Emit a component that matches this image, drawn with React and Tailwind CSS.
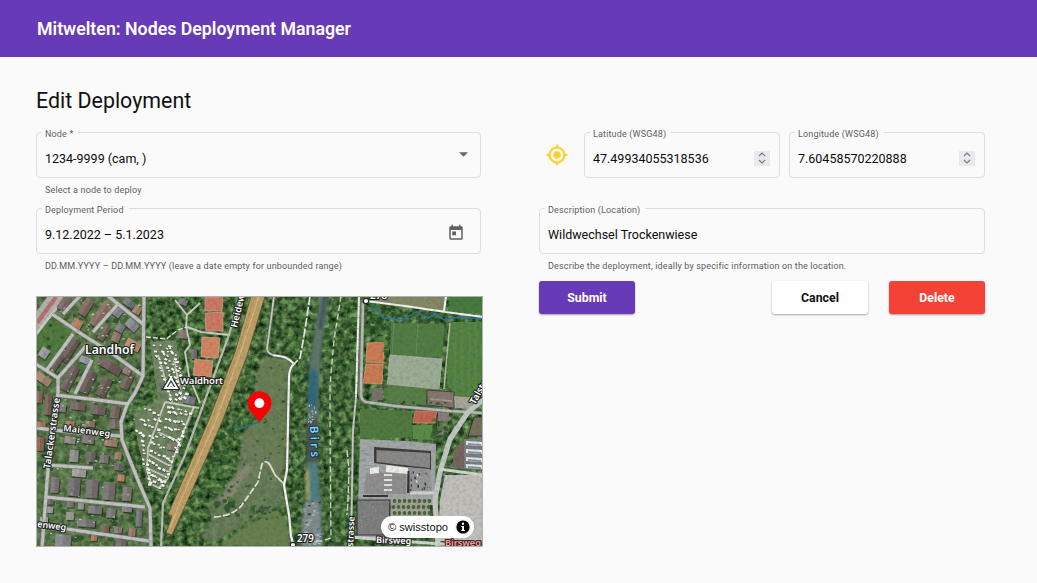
import React from "react";

function random(seed) {
  let s = seed;
  return () => {
    s = (s * 16807) % 2147483647;
    return s / 2147483647;
  };
}

function scatter(seed, count, x, y, w, h, min, max, colors) {
  const r = random(seed);
  return Array.from({ length: count }, () => ({
    x: x + r() * w,
    y: y + r() * h,
    s: min + r() * (max - min),
    c: colors[Math.floor(r() * colors.length)],
  }));
}

const TREE = ["#23421e", "#31552a", "#44703a", "#547f43", "#2a4b26"];

function Trees({ items }) {
  return items.map((t, i) => (
    <ellipse key={i} cx={t.x} cy={t.y} rx={t.s} ry={t.s * 0.85} fill={t.c} opacity="0.7" />
  ));
}

// center x, center y, width, height, rotation, roof colour
const HOUSES = [
  [86, 307, 9, 18, 32, "#7b6358"], [101, 314, 10, 28, 35, "#84695d"], [64, 304, 9, 14, 35, "#75645b"],
  [77, 324, 10, 9, 30, "#b77a5a"], [104, 333, 7, 16, 33, "#6f5d55"], [117, 312, 10, 9, 38, "#838388"],
  [132, 325, 13, 9, 40, "#85858d"], [129, 303, 12, 7, 35, "#6d7075"], [137, 310, 8, 8, 30, "#a17c65"],
  [116, 337, 8, 10, 20, "#8d7565"], [133, 345, 15, 9, 28, "#b6866a"], [120, 328, 8, 8, 30, "#777980"],
  [70, 350, 8, 26, 33, "#655650"], [57, 362, 7, 17, 35, "#6a5c55"], [44, 353, 9, 10, 35, "#95979b"],
  [85, 360, 10, 7, 20, "#8b93a3"], [70, 378, 9, 27, 27, "#695a54"], [88, 382, 10, 24, 26, "#63544f"],
  [104, 387, 10, 20, 26, "#65554f"], [127, 381, 9, 17, 24, "#6b5a53"], [110, 366, 24, 9, 32, "#6b5753"],
  [127, 371, 8, 7, 28, "#86766e"], [43, 379, 17, 8, 35, "#a08069"], [48, 405, 7, 20, 3, "#735c51"],
  [39, 397, 7, 12, 5, "#806355"], [78, 406, 15, 8, 8, "#6f5e57"], [98, 410, 15, 9, 8, "#6d5d58"],
  [115, 412, 9, 13, 8, "#70605a"], [62, 408, 8, 8, 8, "#7d7776"], [115, 424, 11, 10, 4, "#6d6560"],
  [90, 424, 10, 6, 6, "#866e61"], [70, 424, 9, 6, 6, "#a2795f"], [41, 425, 9, 6, 2, "#a87155"],
  [40, 444, 8, 14, 3, "#8a604d"], [70, 440, 11, 7, 8, "#8b8781"], [88, 440, 12, 7, 8, "#76716d"],
  [111, 443, 13, 7, 8, "#9b7460"], [74, 456, 9, 12, 4, "#898a8c"], [91, 457, 9, 10, 4, "#686363"],
  [104, 459, 9, 8, 4, "#78716e"], [118, 456, 7, 7, 4, "#9b7966"], [119, 467, 11, 7, 6, "#64605e"],
  [79, 473, 14, 8, 5, "#9b9a97"], [121, 478, 7, 7, 6, "#ba7b60"], [55, 485, 8, 16, 5, "#777071"],
  [74, 487, 12, 18, 5, "#6e686a"], [92, 489, 12, 18, 5, "#706a6b"], [109, 491, 12, 18, 5, "#716b6c"],
  [127, 494, 9, 14, 5, "#7e716e"], [50, 510, 6, 6, 4, "#969997"], [50, 502, 7, 5, 4, "#686666"],
  [70, 504, 7, 7, 4, "#767170"], [81, 506, 6, 7, 4, "#8e8f8b"], [95, 510, 14, 8, 5, "#777478"],
  [111, 513, 9, 10, 5, "#777376"], [127, 509, 10, 6, 5, "#82807e"], [139, 518, 6, 17, 3, "#706f74"],
  [70, 516, 8, 8, 4, "#96938f"], [86, 523, 18, 8, 4, "#747376"], [105, 529, 8, 7, 5, "#785f54"],
  [118, 530, 8, 7, 5, "#80736d"], [132, 532, 7, 8, 5, "#9a7360"], [63, 541, 16, 13, 5, "#7f7f82"],
  [94, 538, 6, 6, 5, "#a97352"], [121, 543, 11, 7, 5, "#6a6562"], [44, 520, 8, 6, 3, "#aaa8a3"],
  [189, 400, 13, 8, 15, "#77767b"], [194, 354, 6, 10, 2, "#6c6863"], [171, 447, 9, 6, 10, "#837871"],
  [183, 334, 9, 9, 5, "#83736c"], [183, 302, 9, 6, 25, "#77757a"],
];

const CITY_ROADS =
  "M52 314L80 333L110 352L143 376 M73 334L46 371 M108 296L143 324 M63 314L80 296 M118 304L93 332 M144 296L143 376L135 393L127 405L121 422L122 440L131 463L140 485L150 508L151 547 M36 364L58 378L58 394L52 422L48 470L42 547 M56 395L90 399L129 404 M86 346L58 378 M92 360L75 394 M36 428L80 433L121 436 M48 465L93 468 M46 497L145 507 M42 526L60 528L149 541";
const CAMP_ROADS =
  "M158 355L172 402 M174 360L182 398 M165 402L148 448L147 470L151 484L159 488L168 478L172 462L186 425L194 407 M165 402L199 408 M158 432L178 441 M148 454L168 465 M147 468L164 476 M187 315L186 326L190 345L185 352L189 376L200 403 M175 300L187 315L200 303 M187 327L201 332L229 335";

// x1, y1, x2, y2 of every row of caravans
const CAMP_ROWS = [
  [154, 345, 170, 398], [160, 345, 176, 398], [166, 347, 180, 396], [172, 350, 183, 378], [169, 344, 178, 374],
  [181, 378, 185, 396], [144, 408, 157, 413], [140, 418, 158, 418], [135, 430, 156, 436], [143, 424, 157, 427],
  [168, 410, 184, 414], [165, 417, 184, 422], [163, 425, 182, 430], [160, 434, 176, 438], [168, 405, 189, 411],
  [184, 427, 176, 445], [178, 444, 168, 463], [142, 440, 143, 462], [150, 440, 164, 447], [150, 450, 170, 459],
  [148, 460, 167, 470], [149, 474, 160, 477], [146, 464, 149, 484], [167, 472, 160, 488], [153, 479, 165, 480],
];

function caravans() {
  const r = random(77);
  return CAMP_ROWS.flatMap(([x1, y1, x2, y2]) => {
    const n = Math.round(Math.hypot(x2 - x1, y2 - y1) / 4.3);
    return Array.from({ length: n + 1 }, (_, i) => ({
      x: x1 - 1 + ((x2 - x1) * i) / n + r() * 2.4,
      y: y1 - 1 + ((y2 - y1) * i) / n + r() * 2.4,
      s: 1.3 + r() * 1.2,
      a: r() * 50,
    }));
  });
}

function MapLabel({ x, y, size = 10, rotate = 0, fill = "#fff", stroke = "#20241f", children, spacing = 0 }) {
  return (
    <text
      x={x}
      y={y}
      transform={`rotate(${rotate} ${x} ${y})`}
      fontFamily="Noto Sans, sans-serif"
      fontWeight="600"
      fontSize={size}
      letterSpacing={spacing}
      fill={fill}
      stroke={stroke}
      strokeWidth="2.2"
      strokeLinejoin="round"
      paintOrder="stroke"
    >
      {children}
    </text>
  );
}

function AerialMap() {
  return (
    <svg viewBox="36 296 447 251" className="block h-full w-full" preserveAspectRatio="none">
      <defs>
        <filter id="leaves" x="0" y="0" width="100%" height="100%" colorInterpolationFilters="sRGB">
          <feTurbulence type="fractalNoise" baseFrequency="0.17" numOctaves="4" seed="8" result="n" />
          <feColorMatrix in="n" type="matrix" values="0.7 0 0 0 -0.08  0.8 0 0 0 0.01  0.55 0 0 0 -0.05  0 0 0 0 1" result="g" />
          <feComposite in="g" in2="SourceGraphic" operator="in" />
        </filter>
        <filter id="grain" x="0" y="0" width="100%" height="100%" colorInterpolationFilters="sRGB">
          <feTurbulence type="fractalNoise" baseFrequency="0.3" numOctaves="3" seed="4" />
          <feColorMatrix type="matrix" values="0 0 0 0 0.08  0 0 0 0 0.1  0 0 0 0 0.07  1.8 0 0 0 -0.76" />
        </filter>
        <filter id="soft"><feGaussianBlur stdDeviation="0.45" /></filter>
        <filter id="softer"><feGaussianBlur stdDeviation="1.8" /></filter>
      </defs>
      <rect x="36" y="296" width="447" height="251" fill="#3f6334" filter="url(#leaves)" />
      <g filter="url(#soft)">
        <path d="M36 296H144L143 376L128 404L122 440L151 508V547H36Z" fill="#6c825a" opacity="0.5" />
        <path d="M37 330L56 318L72 332L46 366L37 360Z" fill="#4b7a3b" opacity="0.7" />
        <Trees items={scatter(7, 260, 36, 296, 108, 251, 1.2, 3.4, TREE)} />
        <path d="M150 342L176 340L186 398L196 406L180 448L164 490L148 484L137 440L134 414L158 400Z" fill="#7b8b6b" opacity="0.8" />

        <path d="M36 312L48 296H66L36 337Z" fill="#b1b1ae" />
        <path d="M37 323L56 297" stroke="#b9706c" strokeWidth="4" />
        <path d="M36 334L60 304" stroke="#cfcfcb" strokeWidth="2.5" />

        {HOUSES.map(([x, y, w, h, a, c], i) => (
          <g key={i} transform={`translate(${x} ${y}) rotate(${a})`}>
            <rect x={-w / 2 + 1.2} y={-h / 2 + 1.2} width={w} height={h} fill="#1c241b" opacity="0.6" />
            <rect x={-w / 2} y={-h / 2} width={w} height={h} fill={c} />
            <rect x={-w / 2} y={-h / 2} width={w / 2} height={h} fill="#fff" opacity="0.12" />
          </g>
        ))}
        {scatter(91, 150, 50, 300, 90, 240, 0.6, 1.5, ["#d7d8d3", "#aeb0ac", "#85c6c3", "#e4e1d8", "#c9c4b8"]).map((p, i) => (
          <rect key={i} x={p.x} y={p.y} width={p.s * 1.6} height={p.s} fill={p.c} opacity="0.8" />
        ))}
        <path d={CITY_ROADS} fill="none" stroke="#7d8079" strokeWidth="4.4" />
        <path d={CITY_ROADS} fill="none" stroke="#c3c4c2" strokeWidth="3.1" strokeLinejoin="round" />
        <path d={CAMP_ROADS} fill="none" stroke="#c9ccbf" strokeWidth="1.9" strokeLinejoin="round" />
        <path d="M146 337L166 339L178 330L187 327" fill="none" stroke="#eef0ea" strokeWidth="1.3" strokeDasharray="5 2" />
        {caravans().map((p, i) => (
          <g key={i} transform={`rotate(${p.a} ${p.x} ${p.y})`}>
            <rect x={p.x + 0.8} y={p.y + 0.8} width={p.s * 1.5} height={p.s} fill="#2c3b27" opacity="0.6" />
            <rect x={p.x} y={p.y} width={p.s * 1.5} height={p.s} fill="#f6f7f4" />
          </g>
        ))}

        <g stroke="#dcae9a" strokeWidth="0.6">
          <path d="M205 297H223L222 311H205Z M205 313L223 312V331H206Z" fill="#cb7963" />
          <path d="M202 337L220 338L218 358L201 357Z" fill="#d08562" />
          <path d="M195 359L213 361L211 377L193 375Z" fill="#d08562" />
        </g>
      </g>

      <g filter="url(#softer)">
        <path d="M264 356L283 359L293 366L287 380L286 466L280 478L266 468L246 452L240 436L256 420L255 380Z" fill="#6d7f56" opacity="0.9" />
        <path d="M246 436L280 460L284 505L262 514L238 528L215 542L200 538L213 518L208 506L234 476Z" fill="#718060" opacity="0.8" />
        <path d="M276 508L286 520L291 546H218L240 530Z" fill="#67804f" />
        <path d="M219 498L246 464L256 464L226 505Z" fill="#918e7e" opacity="0.7" />
      </g>
      <g filter="url(#soft)">
        <Trees items={scatter(12, 50, 252, 360, 32, 100, 0.6, 1.6, TREE)} />
        <Trees items={scatter(15, 45, 218, 452, 66, 65, 0.6, 1.6, TREE)} />
        <Trees items={scatter(16, 60, 226, 505, 60, 14, 0.8, 2.4, TREE)} />
        <Trees items={scatter(18, 150, 295, 297, 62, 250, 1.5, 3.6, TREE)} />
        <Trees items={scatter(19, 80, 200, 430, 32, 80, 1.5, 3.6, TREE)} />
        <path d="M240 296L229 335L205 400L185 455L163 503L161 547" fill="none" stroke="#b9beb4" strokeWidth="2.2" />
        <path d="M251 296H265L247 356L222 422L187 502L172 535L166 533L172 516L168 514L185 475L208 422L235 352Z" fill="#be9f67" stroke="#5c5437" strokeWidth="0.8" />
        <path d="M259 296L240 354L216 420L180 502L170 528" fill="none" stroke="#d3b87e" strokeWidth="1.2" />
        <path d="M255 296L238 350L212 420L178 500" fill="none" stroke="#a38c5b" strokeWidth="0.7" />
      </g>

      <g filter="url(#softer)">
        <path d="M320 296H329L322 345L319 385L318 460L321 500L323 547H301L307 500L307 430L309 366Z" fill="#61766a" />
        <path d="M309 374Q313 362 318 375L317 408H308Z" fill="#33697a" />
        <path d="M325 296L320 330" stroke="#33505d" strokeWidth="3" />
        <path d="M307 418H318V462H307Z" fill="#4b5652" />
        <path d="M308 464H317L319 500H307Z" fill="#4e7f82" />
        <path d="M304 502H319L322 546H300Z" fill="#828b87" />
        <path d="M307 470L308 500" stroke="#b2a574" strokeWidth="3" />
      </g>
      <g fill="none" filter="url(#soft)">
        {scatter(66, 60, 303, 499, 16, 46, 1, 3, ["#b9c4c2", "#5d82a0", "#a9b5b4", "#394b48", "#7ea3bd"]).map((p, i) => (
          <rect key={i} x={p.x} y={p.y} width={p.s * 1.2} height={p.s * 0.7} fill={p.c} />
        ))}
        {scatter(68, 22, 308, 404, 7, 18, 0.8, 1.7, ["#aebed1", "#c9dae6", "#547b98"]).map((p, i) => (
          <rect key={i} x={p.x} y={p.y} width={p.s} height={p.s * 1.4} fill={p.c} />
        ))}
        <path d="M274 296L271 320L267 348Q267 353 273 355C281 357 286 355 294 364Q289 368 289 378L288 422L287 470L284 485L289 515L291 536L294 547" stroke="#5e6757" strokeWidth="3.2" />
        <path d="M274 296L271 320L267 348Q267 353 273 355" stroke="#ccd1c7" strokeWidth="1.7" />
        <path d="M273 355C281 357 286 355 294 364Q289 368 289 378L288 422L287 470L284 485L289 515L291 536L294 547" stroke="#f3f4ef" strokeWidth="2.2" />
        <path d="M310 296L305 330L300 358L294 364" stroke="#eaece6" strokeWidth="1.7" strokeDasharray="9 2" />
        <path d="M214 517Q233 516 242 505L258 482L262 464Q266 459 270 465" stroke="#e5e7df" strokeWidth="1.7" strokeDasharray="7 2" />
        <path d="M270 465L275 475L284 484" stroke="#e5e7df" strokeWidth="1.7" />
        <path d="M341 296L334 340L330 385L330 430L331 538L322 541L298 541" stroke="#d5d8d0" strokeWidth="1.3" strokeDasharray="6 3" />
        <path d="M347 450L349 470L348 500L347 515" stroke="#d5d8d0" strokeWidth="1.4" strokeDasharray="7 2" />
        <path d="M233 427L243 428L250 425L259 422" stroke="#28727b" strokeWidth="1.5" />
      </g>

      <g filter="url(#soft)">
        <path d="M376 296H445L443 311L372 302Z" fill="#848866" />
        <path d="M451 296H483V314L449 311Z" fill="#467a41" />
        <path d="M391 323L444 324L442 358L390 355Z" fill="#527c45" />
        <path d="M449 322H483V397L457 398L447 385Z" fill="#538143" />
        <path d="M385 384L440 389L427 391L426 405L384 402Z" fill="#587e46" />
        <path d="M360 409L412 411L412 437L360 439Z" fill="#517940" />
        <path d="M390 355L442 359L439 389L387 384Z" fill="#9dac95" stroke="#b3bbab" strokeWidth="0.8" />
        <path d="M415 357L413 386 M394 323L392 354 M418 324L416 355" stroke="#a5b59a" opacity="0.45" strokeWidth="0.6" />
        {[455, 462, 469, 476].map((x) => (
          <path key={x} d={`M${x} 322V398`} stroke="#659253" strokeWidth="2.5" opacity="0.3" />
        ))}
        <path d="M367 343L384 342L384 363L366 362Z M366 364L383 364L382 384L363 383Z" fill="#c97b54" stroke="#d9a17f" strokeWidth="0.7" />
        <path d="M373 388H383V400H372Z" fill="#7c706c" />
        <path d="M427 390L454 392V408L427 405Z" fill="#85776f" stroke="#484340" />
        <path d="M430 399L452 401" stroke="#a49a93" strokeWidth="1.5" />
        <path d="M454 396L476 398L470 409L455 408Z" fill="#a8a59c" />
        <path d="M415 411H437L435 423H413Z" fill="#c1654f" stroke="#dc9b84" strokeWidth="0.6" />
        <path d="M438 411H449V421H438Z" fill="#857976" />
        <path d="M412 425L436 425L433 440L413 439Z" fill="#5b8b4a" />
        <path d="M438 412H449L446 434L436 436Z" fill="#8b7f78" opacity="0.6" />
        <Trees items={scatter(23, 60, 364, 304, 24, 36, 1, 3.2, TREE)} />
        <Trees items={scatter(27, 45, 385, 311, 90, 10, 1, 2.4, TREE)} />
        <Trees items={scatter(28, 25, 384, 340, 3, 62, 1, 2.2, TREE)} />
        <Trees items={scatter(29, 30, 433, 420, 13, 20, 1, 2.8, TREE)} />
        <Trees items={scatter(32, 22, 360, 402, 90, 6, 0.8, 2, TREE)} />

        <path d="M360 439L407 441L436 444L435 505H390V538H357Z" fill="#a1a5a5" />
        {scatter(71, 34, 359, 442, 10, 50, 1, 2, ["#b1bab8", "#8e9897"]).map((p, i) => (
          <rect key={i} x={p.x} y={p.y} width="7" height="0.8" fill={p.c} />
        ))}
        <path d="M374 447L431 451V470L374 463Z" fill="#3c3d3d" />
        <path d="M376.500 450L430 453V468L376.500 462Z" fill="#8b8988" />
        <path d="M366 473L406 472V494L364 494Z" fill="#918e90" />
        <path d="M406 467L430 469L432 491H409Z" fill="#939596" />
        <path d="M386 465L408 468V474L386 472Z M370 468L379 467V473L370 474Z" fill="#ecede9" />
        <path d="M407.500 471H409.500V493H407Z M363 495H388V497H363Z" fill="#343638" />
        {[474, 479, 484, 489].map((y) => <rect key={y} x="384" y={y} width="8" height="2" fill="#e2e2dd" />)}
        <path d="M357 500H390L389 535H357Z" fill="#807f80" stroke="#35383b" strokeWidth="1.2" />
        {scatter(73, 16, 360, 503, 26, 28, 0.6, 1.1, ["#b8b8b8", "#9b9a9b"]).map((p, i) => (
          <rect key={i} x={p.x} y={p.y} width={p.s} height={p.s} fill={p.c} />
        ))}
        <path d="M391 499H430V525H390Z" fill="#a3a193" />
        {[501, 507, 513, 519].map((y) =>
          [393, 398, 403, 408, 413, 418, 423, 428].map((x) => (
            <ellipse key={`${x}-${y}`} cx={x + ((y * 3) % 4) / 2} cy={y} rx="1.8" ry="2" fill="#46663a" />
          ))
        )}
        {scatter(38, 27, 410, 471, 18, 18, 0.8, 1.6, ["#ddd", "#464a50", "#9aa5ae", "#242b34"]).map((p, i) => (
          <rect key={i} x={p.x} y={p.y} width={p.s} height={p.s * 1.7} fill={p.c} />
        ))}
        <path d="M445 475H483V541H438L440 500Z" fill="#c0bfb9" />
        <path d="M464 439L483 438V470L450 468Z" fill="#7e7f80" />
        <path d="M455 448L464 439V468L452 467Z" fill="#74655f" />
        {[441, 449, 457, 464].map((y) => (
          <g key={y}>
            <path d={`M466 ${y}L482 ${y + 1}V${y + 5}L466 ${y + 4}Z`} fill="#e6e9ea" />
            <path d={`M468 ${y + 2}L481 ${y + 3}V${y + 5}L468 ${y + 4}Z`} fill="#8395a8" />
          </g>
        ))}
        <path d="M474 417H483V436H468Z" fill="#77705c" stroke="#343c30" />

        <g fill="none" strokeLinejoin="round">
          <path d="M362 301L360 390Q359 400 366 402L395 406L450 411L482 413" stroke="#6e756a" strokeWidth="4.2" />
          <path d="M363 303L361 390Q360 400 366 402L395 406L450 411L482 413" stroke="#b9bcb5" strokeWidth="2.7" />
          <path d="M359 296L356 397L353 430L351 547" stroke="#c6cac0" strokeWidth="2" />
          <path d="M359 296L356 397" stroke="#eff1eb" strokeWidth="1.7" strokeDasharray="10 1" />
          <path d="M366 301L405 306L446 312L483 317 M446 296L444 311" stroke="#f4f5f1" strokeWidth="2.1" />
          <path d="M450 323L447 355L444 389" stroke="#b5bda8" strokeWidth="1.5" />
          <path d="M483 400L468 412L450 439L440 472L435 500L438 547" stroke="#c3c6c3" strokeWidth="5.2" />
          <path d="M439 469L483 475 M410 493H434 M350 537L400 541L483 547" stroke="#d2d3d0" strokeWidth="3.2" />
          <path d="M369 309L376 309L383 318L403 320L416 312L428 318L436 314L444 320L460 317L483 319" stroke="#2d74a0" strokeWidth="1.4" />
        </g>
      </g>

      <rect x="36" y="296" width="447" height="251" filter="url(#grain)" opacity="0.16" />

      <circle cx="366" cy="301" r="2.7" fill="#fff" stroke="#222" strokeWidth="1.2" />
      <circle cx="293" cy="545" r="2.7" fill="#fff" stroke="#222" strokeWidth="1.2" />
      <MapLabel x={370} y={299} size={10}>278</MapLabel>
      <MapLabel x={85} y={354} size={12.2}>Landhof</MapLabel>
      <path d="M165 388L171 378L177 388Z" fill="none" stroke="#273026" strokeWidth="4.5" />
      <path d="M165 388L171 378L177 388Z M168.5 388L171 384L173.5 388M170 376L172 379M172 376L170 379" fill="#313832" stroke="#fff" strokeWidth="1.8" />
      <MapLabel x={180} y={384} size={9.5}>Waldhort</MapLabel>
      <MapLabel x={63} y={431} size={8.9} rotate={7} spacing={0.3}>Maienweg</MapLabel>
      <MapLabel x={50} y={469} size={9.5} rotate={-82}>Talackerstrasse</MapLabel>
      <MapLabel x={237} y={328} size={9.3} rotate={-77}>Heidew</MapLabel>
      <MapLabel x={37} y={527} size={8.9} rotate={7}>enweg</MapLabel>
      <MapLabel x={310} y={426} size={11.5} rotate={88} spacing={3.2} fill="#86d0ef" stroke="#183c52">Birs</MapLabel>
      <MapLabel x={297} y={542} size={9.8}>279</MapLabel>
      <MapLabel x={353} y={547} size={8.8} rotate={-87}>strasse</MapLabel>
      <MapLabel x={376} y={543} size={9} rotate={2}>Birsweg</MapLabel>
      <MapLabel x={445} y={546} size={9.2} fill="#efa0a4" stroke="#422226">Birsweg</MapLabel>
      <MapLabel x={475} y={405} size={9.5} rotate={-61}>Talstr</MapLabel>

      <path d="M259.5 422.5C256 416 247.5 411 247.5 403.2A12 12 0 0 1 271.5 403.2C271.5 411 263 416 259.5 422.5Z" fill="#f90006" />
      <circle cx="259.4" cy="403.2" r="4.9" fill="#fff" />
      <path d="M36 296.5H482.5V546.5H36.5V296" fill="none" stroke="#aeb1ad" />
    </svg>
  );
}

function Field({ label, className = "", children }) {
  return (
    <div className={`relative flex h-[46px] items-center rounded-[4px] border border-[#dedede] pl-2 pt-[7px] ${className}`}>
      <span className="absolute -top-[6px] left-[5px] bg-[#fafafa] pl-[3px] pr-[5px] text-[9px] leading-[14px] tracking-[0.16px] text-[#606060]">
        {label}
      </span>
      {children}
    </div>
  );
}

function Value({ children }) {
  return <span className="flex-1 whitespace-nowrap text-[12.5px] leading-4 text-[#0c0c0c]">{children}</span>;
}

function Stepper() {
  return (
    <span className="mr-[9px] mb-px flex h-[15px] w-4 items-center justify-center bg-[#e9e9ed]">
      <svg viewBox="0 0 8 12" className="h-3 w-2" fill="none" stroke="#77777d" strokeWidth="1.1">
        <path d="M1 4L4 1L7 4M1 8L4 11L7 8" />
      </svg>
    </span>
  );
}

function Hint({ className = "", children }) {
  return <p className={`pl-[9px] pt-[5px] text-[9px] leading-[14px] tracking-[0.16px] text-[#5c5c5c] ${className}`}>{children}</p>;
}

function Button({ className, children }) {
  return (
    <button className={`h-[33px] rounded-[3px] pt-px text-[12.3px] font-bold shadow-[0_1px_2px_rgba(0,0,0,0.35)] ${className}`}>
      {children}
    </button>
  );
}

export default function App() {
  return (
    <div className="h-[583px] w-[1037px] overflow-hidden bg-[#fafafa] font-['Roboto',sans-serif] text-[#111]">
      <header className="flex h-[57px] items-center bg-[#673ab7] pl-[37px] pt-[2px]">
        <span className="text-[17.75px] font-semibold text-white">Mitwelten: Nodes Deployment Manager</span>
      </header>
      <main className="pl-9 pr-[52px]">
        <h1 className="flex h-[75px] items-center pt-[14px] text-[21.4px]">Edit Deployment</h1>
        <div className="grid grid-cols-[445px_446px] gap-[58px]">
          <section>
            <Field label="Node *">
              <Value>1234-9999 (cam, )</Value>
              <svg viewBox="0 0 10 5" className="mr-3 mb-[9px] h-[5px] w-[9px] fill-[#666]"><path d="M0 0H10L5 5Z" /></svg>
            </Field>
            <Hint className="h-[30px]">Select a node to deploy</Hint>
            <Field label="Deployment Period">
              <Value>9.12.2022 – 5.1.2023</Value>
              <svg viewBox="0 0 24 24" className="mr-[15px] mb-[4px] h-[18px] w-[18px] fill-[#606060]">
                <path d="M19 3h-1V1h-2v2H8V1H6v2H5c-1.11 0-1.99.9-1.99 2L3 19c0 1.1.89 2 2 2h14c1.1 0 2-.9 2-2V5c0-1.1-.9-2-2-2zm0 16H5V8h14v11zM7 10h5v5H7z" />
              </svg>
            </Field>
            <Hint className="h-[42px]">DD.MM.YYYY – DD.MM.YYYY (leave a date empty for unbounded range)</Hint>
            <div className="relative h-[251px] w-[447px] overflow-hidden">
              <AerialMap />
              <div className="absolute bottom-[9px] right-[9px] flex h-[22px] w-[93px] items-center justify-between rounded-full bg-white pl-[7px] pr-[3px] font-['Liberation_Sans',sans-serif] text-[11.1px] text-[#111]">
                <span>© swisstopo</span>
                <svg viewBox="0 0 16 16" className="h-4 w-4">
                  <circle cx="8" cy="8" r="8" fill="#f2f2f2" />
                  <circle cx="8" cy="8" r="6.6" />
                  <circle cx="8" cy="4.7" r="1.2" fill="#fff" />
                  <path d="M6.2 7H9V11H10V12H6.2V11H7.1V8H6.2Z" fill="#fff" />
                </svg>
              </div>
            </div>
          </section>
          <section>
            <div className="flex h-[76px]">
              <div className="flex h-[46px] w-[45px] items-center pl-[7px]">
                <svg viewBox="0 0 24 24" className="h-[22px] w-[22px] fill-[#fdd12f] stroke-[#fdd12f] stroke-[0.5]">
                  <path d="M12 8c-2.21 0-4 1.79-4 4s1.79 4 4 4 4-1.79 4-4-1.79-4-4-4zm8.94 3c-.46-4.17-3.77-7.48-7.94-7.94V1h-2v2.06C6.83 3.52 3.52 6.83 3.06 11H1v2h2.06c.46 4.17 3.77 7.48 7.94 7.94V23h2v-2.06c4.17-.46 7.48-3.77 7.94-7.94H23v-2h-2.06zM12 19c-3.87 0-7-3.13-7-7s3.13-7 7-7 7 3.13 7 7-3.13 7-7 7z" />
                </svg>
              </div>
              <Field label="Latitude (WSG48)" className="flex-1">
                <Value>47.49934055318536</Value>
                <Stepper />
              </Field>
              <Field label="Longitude (WSG48)" className="ml-[9px] flex-1">
                <Value>7.60458570220888</Value>
                <Stepper />
              </Field>
            </div>
            <Field label="Description (Location)">
              <Value>Wildwechsel Trockenwiese</Value>
            </Field>
            <Hint className="h-[27px]">Describe the deployment, ideally by specific information on the location.</Hint>
            <div className="flex">
              <Button className="mr-auto w-[96px] bg-[#673ab7] text-white">Submit</Button>
              <Button className="mr-[21px] w-24 bg-white text-[#111]">Cancel</Button>
              <Button className="w-[96px] bg-[#f44336] text-white">Delete</Button>
            </div>
          </section>
        </div>
      </main>
    </div>
  );
}
